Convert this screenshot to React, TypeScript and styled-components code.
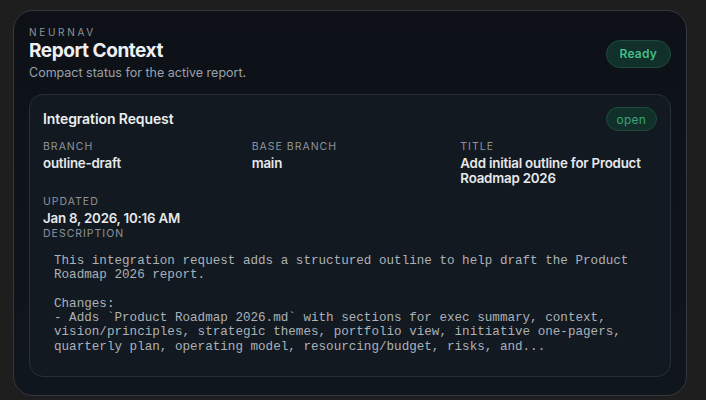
import React from "react";
import styled, { createGlobalStyle } from "styled-components";

const Global = createGlobalStyle`
  html, body { margin: 0; padding: 0; background: #1e1e1f; }
  body { font-family: Inter, "Noto Sans", sans-serif; -webkit-font-smoothing: antialiased; }
  * { box-sizing: border-box; }
`;

const Page = styled.div`
  padding: 10px 19px 4px 13px;
  background: #1e1e1f;
  min-height: 400px;
`;

const Panel = styled.section`
  background: linear-gradient(180deg, #0d1117 0%, #10161d 100%);
  border: 1px solid #34373b;
  border-radius: 20px;
  padding: 14px 15px 18px;
`;

const Header = styled.header`
  display: flex;
  align-items: center;
  justify-content: space-between;
`;

const HeadText = styled.div`
  display: flex;
  flex-direction: column;
`;

const Eyebrow = styled.div`
  font-size: 10px;
  line-height: 14px;
  letter-spacing: 2.7px;
  color: #8d939b;
  text-transform: uppercase;
`;

const Title = styled.h1`
  margin: 0;
  font-size: 19px;
  line-height: 24px;
  font-weight: 700;
  color: #eef0f3;
  letter-spacing: -0.45px;
`;

const Subtitle = styled.p`
  margin: 1px 0 0;
  font-size: 12.5px;
  line-height: 18px;
  color: #9aa1aa;
`;

const Badge = styled.span<{ $size?: "lg" | "sm" }>`
  display: inline-flex;
  align-items: center;
  justify-content: center;
  border-radius: 999px;
  background: #12302a;
  border: 1px solid #1e4a3c;
  color: ${(p) => (p.$size === "lg" ? "#45bd89" : "#3aa377")};
  font-size: 12px;
  font-weight: ${(p) => (p.$size === "lg" ? 600 : 400)};
  height: ${(p) => (p.$size === "lg" ? "28px" : "24px")};
  padding: ${(p) => (p.$size === "lg" ? "0 13px" : "0 10px")};
  letter-spacing: 0.2px;
`;

const Card = styled.div`
  margin-top: 12px;
  background: #121920;
  border: 1px solid #27303a;
  border-radius: 14px;
  padding: 12px 13px 12px;
`;

const CardTop = styled.div`
  display: flex;
  align-items: center;
  justify-content: space-between;
`;

const CardTitle = styled.h2`
  margin: 0;
  font-size: 14px;
  line-height: 18px;
  font-weight: 600;
  color: #eceef1;
  letter-spacing: -0.1px;
`;

const Grid = styled.div`
  margin-top: 8px;
  display: grid;
  grid-template-columns: repeat(3, 1fr);
  column-gap: 12px;
  row-gap: 8px;
`;

const Field = styled.div`
  display: flex;
  flex-direction: column;
`;

const Label = styled.div`
  font-size: 10.5px;
  line-height: 15px;
  letter-spacing: 1px;
  text-transform: uppercase;
  color: #8d939b;
`;

const Value = styled.div`
  font-size: 13.3px;
  line-height: 15px;
  font-weight: 600;
  color: #e6e8eb;
  margin-top: 2px;
  letter-spacing: -0.2px;
`;

const Desc = styled.div`
  margin-top: 0;
`;

const Pre = styled.pre`
  margin: 3px 0 0;
  padding: 10px 11px;
  font-family: "Liberation Mono", "DejaVu Sans Mono", monospace;
  font-size: 12.6px;
  line-height: 14.3px;
  color: #acb1b8;
  white-space: pre-wrap;
`;

const description = `This integration request adds a structured outline to help draft the Product
Roadmap 2026 report.

Changes:
- Adds \`Product Roadmap 2026.md\` with sections for exec summary, context,
vision/principles, strategic themes, portfolio view, initiative one-pagers,
quarterly plan, operating model, resourcing/budget, risks, and...`;

export default function App() {
  return (
    <>
      <Global />
      <Page>
        <Panel>
          <Header>
            <HeadText>
              <Eyebrow>NeurNav</Eyebrow>
              <Title>Report Context</Title>
              <Subtitle>Compact status for the active report.</Subtitle>
            </HeadText>
            <Badge $size="lg">Ready</Badge>
          </Header>
          <Card>
            <CardTop>
              <CardTitle>Integration Request</CardTitle>
              <Badge $size="sm">open</Badge>
            </CardTop>
            <Grid>
              <Field>
                <Label>Branch</Label>
                <Value>outline-draft</Value>
              </Field>
              <Field>
                <Label>Base branch</Label>
                <Value>main</Value>
              </Field>
              <Field>
                <Label>Title</Label>
                <Value>Add initial outline for Product Roadmap 2026</Value>
              </Field>
              <Field>
                <Label>Updated</Label>
                <Value>Jan 8, 2026, 10:16 AM</Value>
              </Field>
            </Grid>
            <Desc>
              <Label>Description</Label>
              <Pre>{description}</Pre>
            </Desc>
          </Card>
        </Panel>
      </Page>
    </>
  );
}
